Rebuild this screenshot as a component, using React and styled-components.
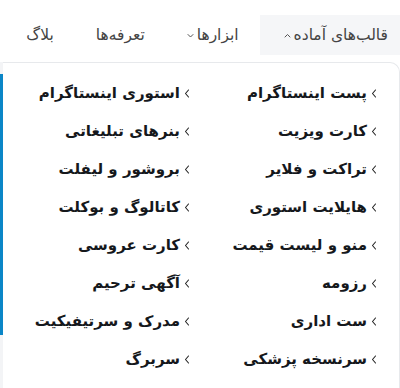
import styled, { createGlobalStyle } from "styled-components";

const GlobalStyle = createGlobalStyle`
  html, body {
    margin: 0;
    padding: 0;
    background: #fff;
  }
  body {
    font-family: 'DejaVu Sans', 'Noto Sans', sans-serif;
    direction: rtl;
    overflow: hidden;
  }
`;

const navItems = [
  { label: "قالب‌های آماده", arrow: "up", active: true },
  { label: "ابزارها", arrow: "down" },
  { label: "تعرفه‌ها" },
  { label: "بلاگ" },
];

const menuItems = [
  "پست اینستاگرام",
  "استوری اینستاگرام",
  "کارت ویزیت",
  "بنرهای تبلیغاتی",
  "تراکت و فلایر",
  "بروشور و لیفلت",
  "هایلایت استوری",
  "کاتالوگ و بوکلت",
  "منو و لیست قیمت",
  "کارت عروسی",
  "رزومه",
  "آگهی ترحیم",
  "ست اداری",
  "مدرک و سرتیفیکیت",
  "سرنسخه پزشکی",
  "سربرگ",
];

function Caret({ dir }) {
  const d = dir === "up" ? "M1 4 L3.5 1.5 L6 4" : "M1 1.5 L3.5 4 L6 1.5";
  return (
    <svg width="7" height="6" viewBox="0 0 7 6">
      <path d={d} fill="none" stroke="#555" strokeWidth="1" strokeLinecap="round" strokeLinejoin="round" />
    </svg>
  );
}

function ChevronLeft() {
  return (
    <svg width="6" height="9" viewBox="0 0 6 9">
      <path d="M4.5 1 L1.5 4.5 L4.5 8" fill="none" stroke="#222" strokeWidth="1.1" strokeLinecap="round" strokeLinejoin="round" />
    </svg>
  );
}

export default function App() {
  return (
    <Page>
      <GlobalStyle />
      <Nav>
        {navItems.map((item) => (
          <NavItem key={item.label} active={item.active}>
            <span>{item.label}</span>
            {item.arrow && <Caret dir={item.arrow} />}
          </NavItem>
        ))}
      </Nav>
      <Body>
        <Panel>
          <MenuGrid>
            {menuItems.map((label) => (
              <MenuItem key={label}>
                <ChevronLeft />
                <span>{label}</span>
              </MenuItem>
            ))}
          </MenuGrid>
        </Panel>
        <SideStrip>
          <BlueBlock />
        </SideStrip>
      </Body>
    </Page>
  );
}

const Page = styled.div`
  width: 400px;
  height: 388px;
  overflow: hidden;
  background: #fff;
`;

const Nav = styled.nav`
  display: flex;
  align-items: center;
  padding-top: 15px;
  height: 40px;
`;

const NavItem = styled.div`
  display: flex;
  align-items: center;
  gap: 3px;
  height: 40px;
  padding: ${(p) => (p.active ? "0 12px 0 24px" : "0 21px")};
  background: ${(p) => (p.active ? "#f5f6f8" : "transparent")};
  font-size: 15.5px;
  color: #444;
  white-space: nowrap;

  svg {
    margin-top: 2px;
  }
`;

const Body = styled.div`
  display: flex;
  margin-top: 7px;
  height: 326px;
`;

const Panel = styled.div`
  flex: 1;
  border-top: 1px solid #e7e9ec;
  border-right: 1px solid #e7e9ec;
  border-top-right-radius: 10px;
  background: #fff;
`;

const MenuGrid = styled.div`
  display: grid;
  grid-template-columns: 187px 187px;
  grid-auto-rows: 38px;
  padding: 11px 22px 0 0;
`;

const MenuItem = styled.div`
  display: flex;
  align-items: center;
  gap: 4px;
  font-size: 15px;
  font-weight: bold;
  color: #15181c;
  white-space: nowrap;
`;

const SideStrip = styled.div`
  width: 6px;
  padding-top: 12px;
  background: #f3f4f6;
`;

const BlueBlock = styled.div`
  height: 261px;
  background: #0a86c7;
`;
